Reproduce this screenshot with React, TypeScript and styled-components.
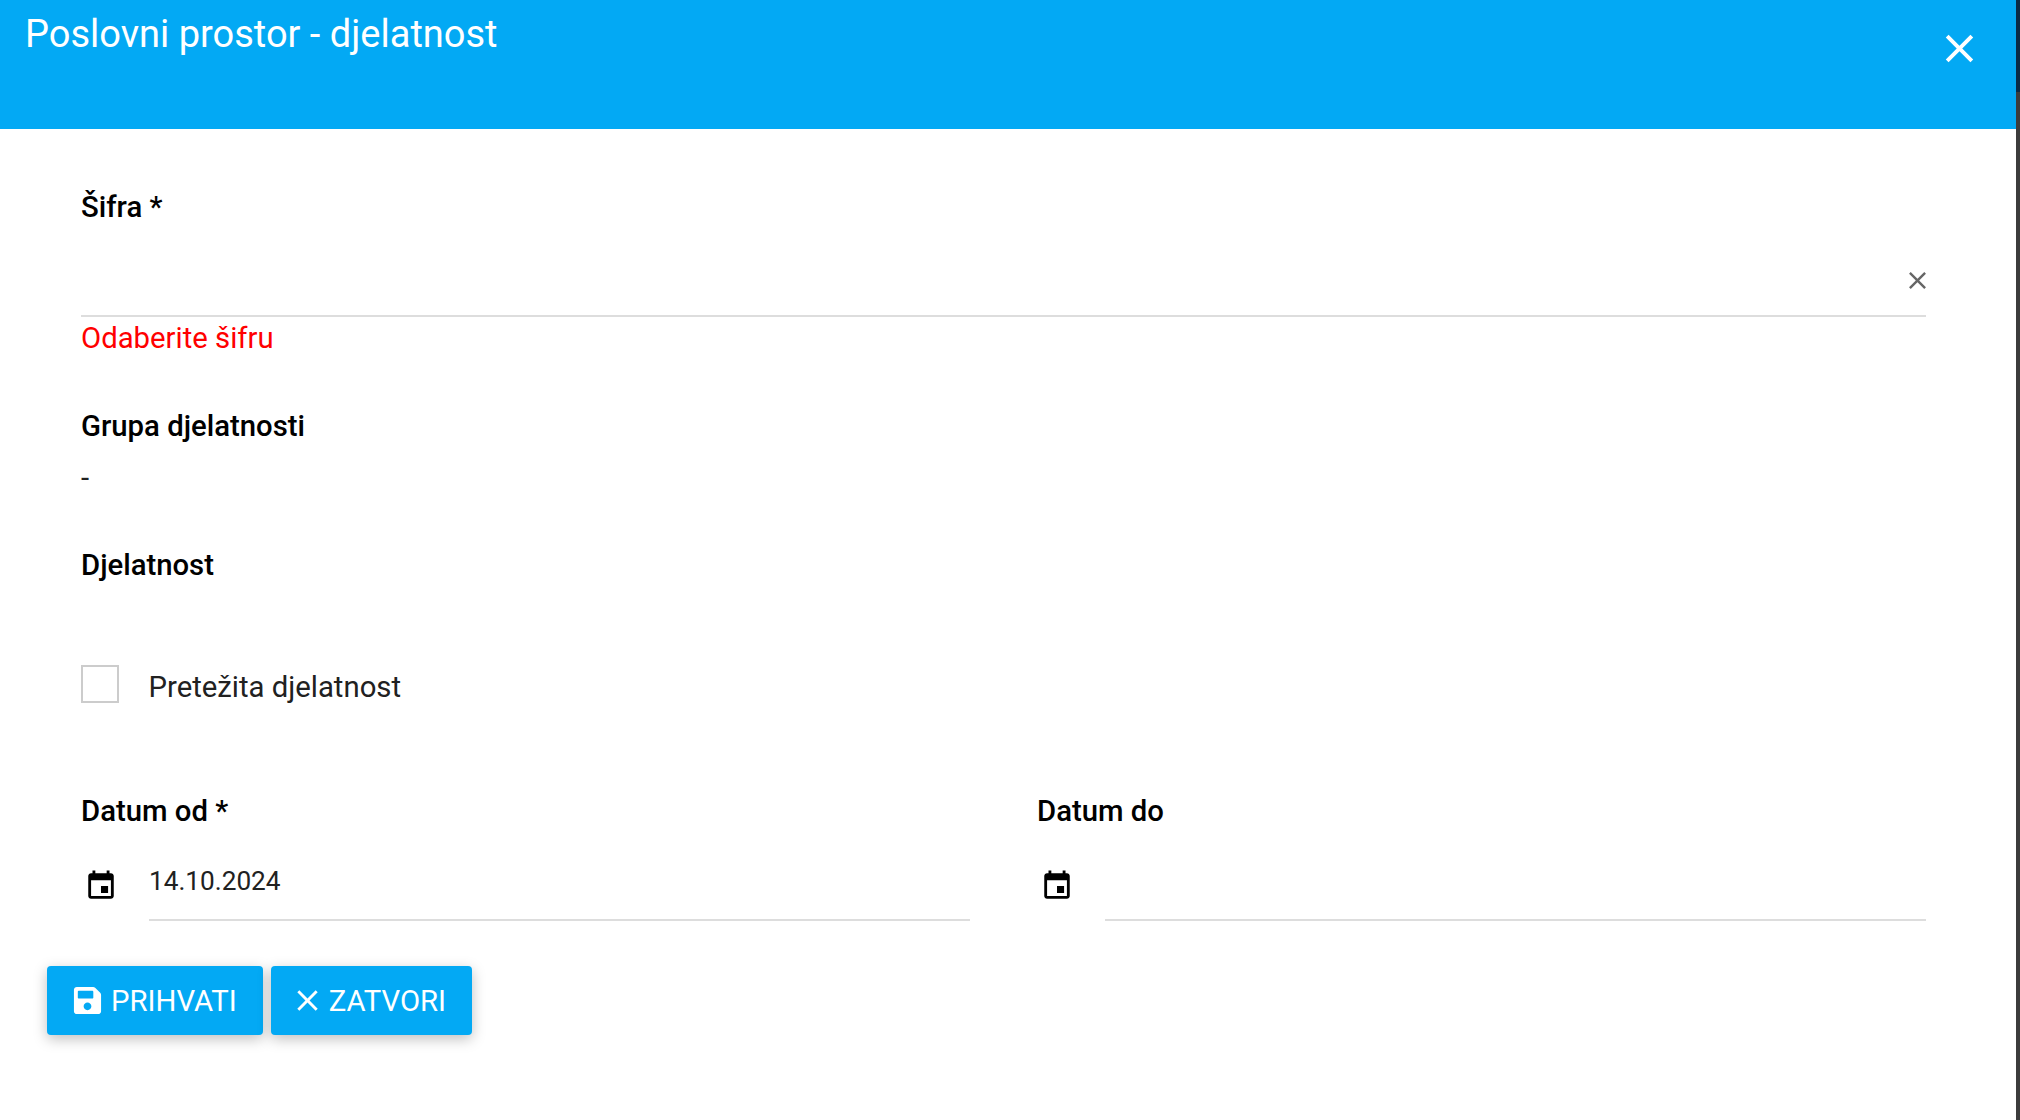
import styled, { createGlobalStyle } from "styled-components";
import { FaSave } from "react-icons/fa";

const GlobalStyle = createGlobalStyle`
  html, body {
    margin: 0;
    height: 100%;
    overflow: hidden;
    background: #fff;
    font-family: Roboto, "Liberation Sans", sans-serif;
  }
`;

function ClearIcon({ size, color }: { size: number; color: string }) {
  return (
    <svg width={size} height={size} viewBox="0 0 24 24" fill={color}>
      <path d="M19 6.41L17.59 5 12 10.59 6.41 5 5 6.41 10.59 12 5 17.59 6.41 19 12 13.41 17.59 19 19 17.59 13.41 12z" />
    </svg>
  );
}

function EventIcon() {
  return (
    <svg width={34} height={34} viewBox="0 0 24 24" fill="#000">
      <path d="M17 12h-5v5h5v-5zM16 1v2H8V1H6v2H5c-1.11 0-1.99.9-1.99 2L3 19c0 1.1.89 2 2 2h14c1.1 0 2-.9 2-2V5c0-1.1-.9-2-2-2h-1V1h-2zm3 18H5V8h14v11z" />
    </svg>
  );
}

function DateField({ label, value }: { label: string; value?: string }) {
  return (
    <div>
      <FieldLabel>{label}</FieldLabel>
      <DateRow>
        <DateIcon>
          <EventIcon />
        </DateIcon>
        <DateInput>{value}</DateInput>
      </DateRow>
    </div>
  );
}

export default function App() {
  return (
    <Page>
      <GlobalStyle />
      <Dialog>
        <Header>
          <Title>Poslovni prostor - djelatnost</Title>
          <HeaderClose>
            <ClearIcon size={47} color="#fff" />
          </HeaderClose>
        </Header>
        <Body>
          <FieldLabel>Šifra *</FieldLabel>
          <SelectInput>
            <InputClear>
              <ClearIcon size={29} color="#666" />
            </InputClear>
          </SelectInput>
          <ErrorText>Odaberite šifru</ErrorText>
          <GroupLabel>Grupa djelatnosti</GroupLabel>
          <StaticValue>-</StaticValue>
          <ActivityLabel>Djelatnost</ActivityLabel>
          <CheckRow>
            <CheckBox />
            <CheckText>Pretežita djelatnost</CheckText>
          </CheckRow>
          <DateGrid>
            <DateField label="Datum od *" value="14.10.2024" />
            <DateField label="Datum do" />
          </DateGrid>
        </Body>
        <Actions>
          <ActionButton>
            <FaSave size={31} />
            PRIHVATI
          </ActionButton>
          <ActionButton>
            <ButtonClear>
              <ClearIcon size={35} color="#fff" />
            </ButtonClear>
            ZATVORI
          </ActionButton>
        </Actions>
      </Dialog>
      <BackdropStrip />
    </Page>
  );
}

const Page = styled.div`
  display: flex;
  width: 2020px;
  height: 1120px;
  overflow: hidden;
`;

const Dialog = styled.div`
  flex: 1;
  background: #fff;
  min-width: 0;
`;

const BackdropStrip = styled.div`
  width: 4px;
  background: linear-gradient(#0a2a45 0, #0a2a45 92px, #3c3c3c 92px);
`;

const Header = styled.div`
  height: 129px;
  box-sizing: border-box;
  background: #03a9f4;
  display: flex;
  justify-content: space-between;
  align-items: flex-start;
  padding: 12px 33px 0 25px;
`;

const Title = styled.h1`
  margin: 0;
  font-size: 38px;
  line-height: 44px;
  font-weight: 400;
  color: #fff;
`;

const HeaderClose = styled.div`
  display: flex;
  margin-top: 13px;
`;

const Body = styled.div`
  padding: 60px 90px 0 81px;
`;

const FieldLabel = styled.div`
  font-size: 29.3px;
  line-height: 36px;
  font-weight: 500;
  color: #000;
`;

const SelectInput = styled.div`
  height: 92px;
  box-sizing: border-box;
  border-bottom: 2px solid #ddd;
  display: flex;
  justify-content: flex-end;
  align-items: center;
  padding-top: 20px;
`;

const InputClear = styled.span`
  display: flex;
  margin-right: -6px;
`;

const ErrorText = styled.div`
  margin-top: 3px;
  font-size: 29.3px;
  line-height: 36px;
  color: #f00;
`;

const GroupLabel = styled(FieldLabel)`
  margin-top: 52px;
`;

const StaticValue = styled.div`
  margin-top: 16px;
  font-size: 29.3px;
  line-height: 36px;
  color: #212121;
`;

const ActivityLabel = styled(FieldLabel)`
  margin-top: 51px;
`;

const CheckRow = styled.div`
  margin-top: 82px;
  display: flex;
  align-items: flex-start;
  gap: 29.5px;
`;

const CheckBox = styled.div`
  width: 38px;
  height: 38px;
  box-sizing: border-box;
  border: 2px solid #ccc;
`;

const CheckText = styled.div`
  font-size: 29.3px;
  line-height: 38px;
  padding-top: 3px;
  color: #212121;
`;

const DateGrid = styled.div`
  margin-top: 87px;
  display: grid;
  grid-template-columns: 889px 889px;
  column-gap: 67px;
`;

const DateRow = styled.div`
  margin-top: 16px;
  display: flex;
  align-items: flex-start;
`;

const DateIcon = styled.div`
  width: 68px;
  box-sizing: border-box;
  display: flex;
  padding: 24px 0 0 3px;
`;

const DateInput = styled.div`
  flex: 1;
  height: 76px;
  box-sizing: border-box;
  border-bottom: 2px solid #ddd;
  font-size: 26.2px;
  line-height: 36px;
  padding-top: 18px;
  color: #212121;
`;

const Actions = styled.div`
  margin-top: 45px;
  padding-left: 47px;
  display: flex;
  gap: 8px;
`;

const ActionButton = styled.div`
  height: 69px;
  box-sizing: border-box;
  padding: 0 26px 0 25px;
  display: flex;
  align-items: center;
  gap: 8px;
  background: #03a9f4;
  border-radius: 4px;
  color: #fff;
  font-size: 29.3px;
  box-shadow: 0 4px 14px rgba(0, 0, 0, 0.25);
`;

const ButtonClear = styled.span`
  display: flex;
  margin: 0 -4px 0 -6px;
`;
